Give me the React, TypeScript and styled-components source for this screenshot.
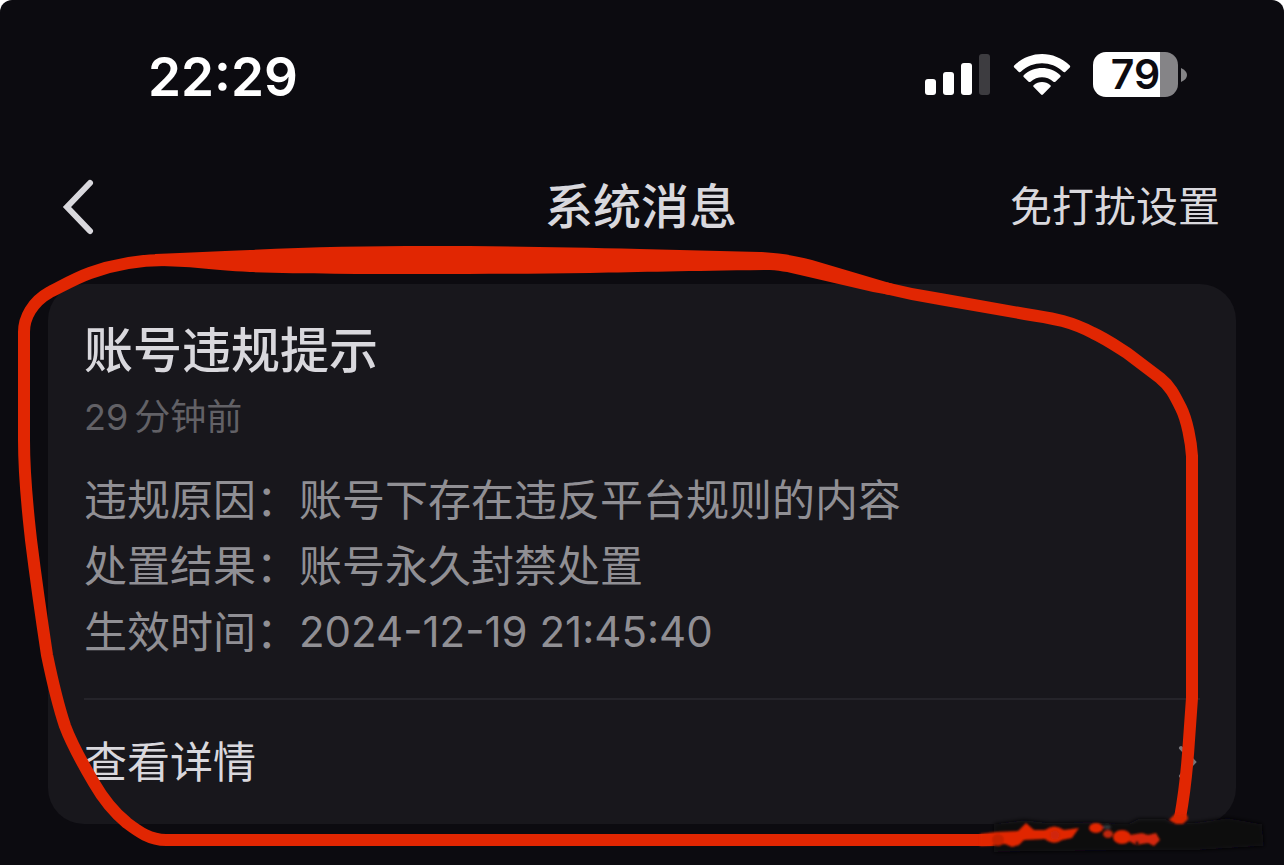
import React from "react";
import styled, { createGlobalStyle } from "styled-components";

const GlobalStyle = createGlobalStyle`
  *, *::before, *::after { box-sizing: border-box; }
  body {
    margin: 0;
    background: #ffffff;
    font-family: Inter, "Noto Sans CJK SC", sans-serif;
    color: #d9d8dd;
  }
  button { font: inherit; color: inherit; background: none; border: 0; padding: 0; cursor: pointer; }
  a { color: inherit; text-decoration: none; }
  h1, h2, p, dl, dd { margin: 0; }
`;

const Screen = styled.div`
  position: relative;
  min-height: 100vh;
  background: #0c0b10;
  border-radius: 12px 12px 0 0;
  overflow: hidden;
`;

const StatusBar = styled.header`
  display: flex;
  align-items: center;
  justify-content: space-between;
  height: 149px;
  padding: 0 97px 0 148px;
  color: #ffffff;
`;

const Clock = styled.time`
  font-size: 53px;
  line-height: 60px;
  padding-top: 4px;
  font-weight: 600;
`;

const StatusIcons = styled.div`
  display: flex;
  align-items: center;
  gap: 22px;
`;

const Battery = styled.div`
  display: flex;
  align-items: center;
  gap: 3px;
`;

const BatteryBody = styled.div`
  display: flex;
  align-items: center;
  justify-content: center;
  width: 85px;
  height: 45px;
  border-radius: 13px;
  background: linear-gradient(to right, #ffffff 79%, #858487 79%);
  color: #0c0b10;
  font-size: 41px;
  line-height: 45px;
  font-weight: 600;
`;

const NavBar = styled.nav`
  display: grid;
  grid-template-columns: 1fr auto 1fr;
  align-items: center;
  height: 115px;
  padding: 0 64px 0 62px;
`;

const BackButton = styled.button`
  display: flex;
  justify-self: start;
`;

const NavTitle = styled.h1`
  font-size: 48px;
  line-height: 64px;
  font-weight: 500;
`;

const NavAction = styled.button`
  justify-self: end;
  font-size: 42px;
  line-height: 64px;
`;

const Card = styled.article`
  margin: 20px 48px 0;
  padding: 33px 36px 0;
  border-radius: 36px;
  background: #18171c;
`;

const CardTitle = styled.h2`
  font-size: 49px;
  line-height: 68px;
  font-weight: 500;
`;

const Ago = styled.p`
  display: flex;
  gap: 6px;
  margin-top: 8px;
  font-size: 36px;
  line-height: 48px;
  color: #626166;
`;

const Details = styled.dl`
  margin-top: 26px;
  padding-bottom: 33px;
  border-bottom: 2px solid #25242a;
  font-size: 43px;
  line-height: 66px;
  color: #908f94;
`;

const DetailRow = styled.div`
  display: flex;
`;

const DetailValue = styled.dd<{ $numeric?: boolean }>`
  font-size: ${(p) => (p.$numeric ? 42 : 43)}px;
`;

const DetailsLink = styled.a`
  display: flex;
  align-items: center;
  justify-content: space-between;
  height: 124px;
  padding-right: 2px;
  font-size: 43px;
  line-height: 64px;
`;

const Annotation = styled.svg`
  position: absolute;
  top: 0;
  left: 0;
  width: 100%;
  pointer-events: none;
`;

const details = [
  { label: "违规原因：", value: "账号下存在违反平台规则的内容" },
  { label: "处置结果：", value: "账号永久封禁处置" },
  { label: "生效时间：", value: "2024-12-19 21:45:40", numeric: true },
];

function SignalIcon() {
  return (
    <svg width="66" height="42" viewBox="0 0 66 42" fill="#fff" aria-hidden="true">
      <rect x="0" y="25" width="11" height="16" rx="3" />
      <rect x="18" y="18" width="11" height="23" rx="3" />
      <rect x="36" y="9" width="11" height="32" rx="3" />
      <rect x="54" y="0" width="11" height="41" rx="3" fill="#3d3c40" />
    </svg>
  );
}

function WifiIcon() {
  return (
    <svg width="58" height="42" viewBox="0 0 58 42" fill="#fff" aria-hidden="true">
      <path d="M1.2 11.6C17 -3.800 41 -3.800 56.800 11.600Q57.600 12.500 56.800 13.400L52.200 17.900Q51.200 18.700 50.200 17.800C38 6.500 20 6.500 7.800 17.800Q6.800 18.700 5.800 17.900L1.200 13.400Q0.400 12.500 1.200 11.600Z" />
      <path d="M10.700 21.300C21 11.700 37 11.700 47.300 21.300Q48.100 22.200 47.300 23L42.400 27.700Q41.400 28.500 40.400 27.700C33.500 21.800 24.500 21.800 17.600 27.700Q16.600 28.500 15.600 27.700L10.700 23Q9.900 22.200 10.700 21.300Z" />
      <path d="M20.600 31.200C25.500 27 32.500 27 37.400 31.200Q38.300 32 37.500 32.800L29.900 40.600Q29 41.400 28.100 40.600L20.500 32.800Q19.700 32 20.600 31.200Z" />
    </svg>
  );
}

function RedMarker() {
  return (
    <Annotation viewBox="0 0 1284 865" aria-hidden="true">
      <defs>
        <filter id="soft" x="-10%" y="-50%" width="120%" height="200%">
          <feGaussianBlur stdDeviation="2" />
        </filter>
        <filter id="blot" x="-10%" y="-50%" width="120%" height="200%">
          <feGaussianBlur stdDeviation="0.8" />
        </filter>
      </defs>
      <path
        fill="none"
        stroke="#e12602"
        strokeWidth="12"
        strokeLinejoin="round"
        d="M165 260C138 260 112 265 90 273C76 278 62 286 50 292C32 302 24 318 24 332V440C24 480 28 512 31 540C36 580 42 622 47 655C53 684 57 702 65 726C72 745 84 766 94 783C106 804 116 814 127 823C139 832 150 840 166 840H1000"
      />
      <path
        fill="none"
        stroke="#e12602"
        strokeWidth="12"
        strokeLinejoin="round"
        d="M885 288C905 293 920 296 940 299L1025 314C1048 318 1066 319 1093 333C1106 339 1116 346 1127 353L1160 378C1170 386 1174 394 1181 408C1187 420 1191 441 1192 456V698L1189 740C1187 772 1184 796 1180 818"
      />
      <path
        fill="#e12602"
        d="M155 254C190 253 215 251 250 250C310 247 370 246 427 246C500 246 560 247 640 249L760 252C780 253 797 256 812 260L893 284L890 295L873 292L800 275C788 272 778 270 765 270C690 271 640 272 590 273C530 274 480 274 427 274C360 274 300 274 250 272C210 270 190 266 155 266Z"
      />
      <path
        fill="#08070b"
        filter="url(#soft)"
        d="M994 824L1024 820L1050 823L1088 822L1128 824L1138 819L1166 819L1174 824L1200 822L1228 818L1262 824L1264 846L1200 850L1160 850L994 852Z"
      />
      <g filter="url(#blot)">
        <path fill="#e12602" d="M980 834L996 832L1018 831L1026 823L1034 830H1045Q1054 823 1064 830L1079 828L1072 838L1062 840Q1054 846 1045 839L1024 840L1019 845L1012 847L1005 844L994 845L980 846Z" />
        <circle cx="998" cy="840" r="6" fill="#c52405" />
        <circle cx="1055" cy="835" r="5" fill="#d02807" />
        <ellipse cx="1096" cy="828" rx="7" ry="5" fill="#e12602" />
        <ellipse cx="1108" cy="834" rx="5" ry="4" fill="#bd2507" />
        <ellipse cx="1107" cy="827" rx="4" ry="2" fill="#34383a" />
        <ellipse cx="1122" cy="837" rx="9" ry="7" fill="#e12602" />
        <path fill="#d32807" d="M1130 835L1142 833L1148 835L1156 833L1160 840L1154 846L1148 843L1136 845L1129 841Z" />
        <circle cx="1137" cy="843" r="2" fill="#24100d" />
        <path fill="#d92805" d="M1175 814L1187 815L1188 819L1183 824L1176 824L1169 820Z" />
      </g>
    </Annotation>
  );
}

export default function App() {
  return (
    <>
      <GlobalStyle />
      <Screen>
        <StatusBar>
          <Clock>22:29</Clock>
          <StatusIcons>
            <SignalIcon />
            <WifiIcon />
            <Battery>
              <BatteryBody>79</BatteryBody>
              <svg width="6" height="14" viewBox="0 0 6 14" aria-hidden="true">
                <path d="M0 0C4 2 6 4 6 7S4 12 0 14Z" fill="#858487" />
              </svg>
            </Battery>
          </StatusIcons>
        </StatusBar>
        <NavBar>
          <BackButton aria-label="返回">
            <svg width="32" height="56" viewBox="0 0 32 56" fill="none" stroke="#d9d8dd" strokeWidth="6" strokeLinecap="round" aria-hidden="true">
              <path d="M28 4L5 28L28 52" />
            </svg>
          </BackButton>
          <NavTitle>系统消息</NavTitle>
          <NavAction>免打扰设置</NavAction>
        </NavBar>
        <main>
          <Card>
            <CardTitle>账号违规提示</CardTitle>
            <Ago>
              <span>29</span>
              <span>分钟前</span>
            </Ago>
            <Details>
              {details.map((item) => (
                <DetailRow key={item.label}>
                  <dt>{item.label}</dt>
                  <DetailValue $numeric={item.numeric}>{item.value}</DetailValue>
                </DetailRow>
              ))}
            </Details>
            <DetailsLink href="#details">
              查看详情
              <svg width="20" height="36" viewBox="0 0 20 36" fill="none" stroke="#77767b" strokeWidth="4" strokeLinecap="round" aria-hidden="true">
                <path d="M3 4L16 18L3 32" />
              </svg>
            </DetailsLink>
          </Card>
        </main>
        <RedMarker />
      </Screen>
    </>
  );
}
